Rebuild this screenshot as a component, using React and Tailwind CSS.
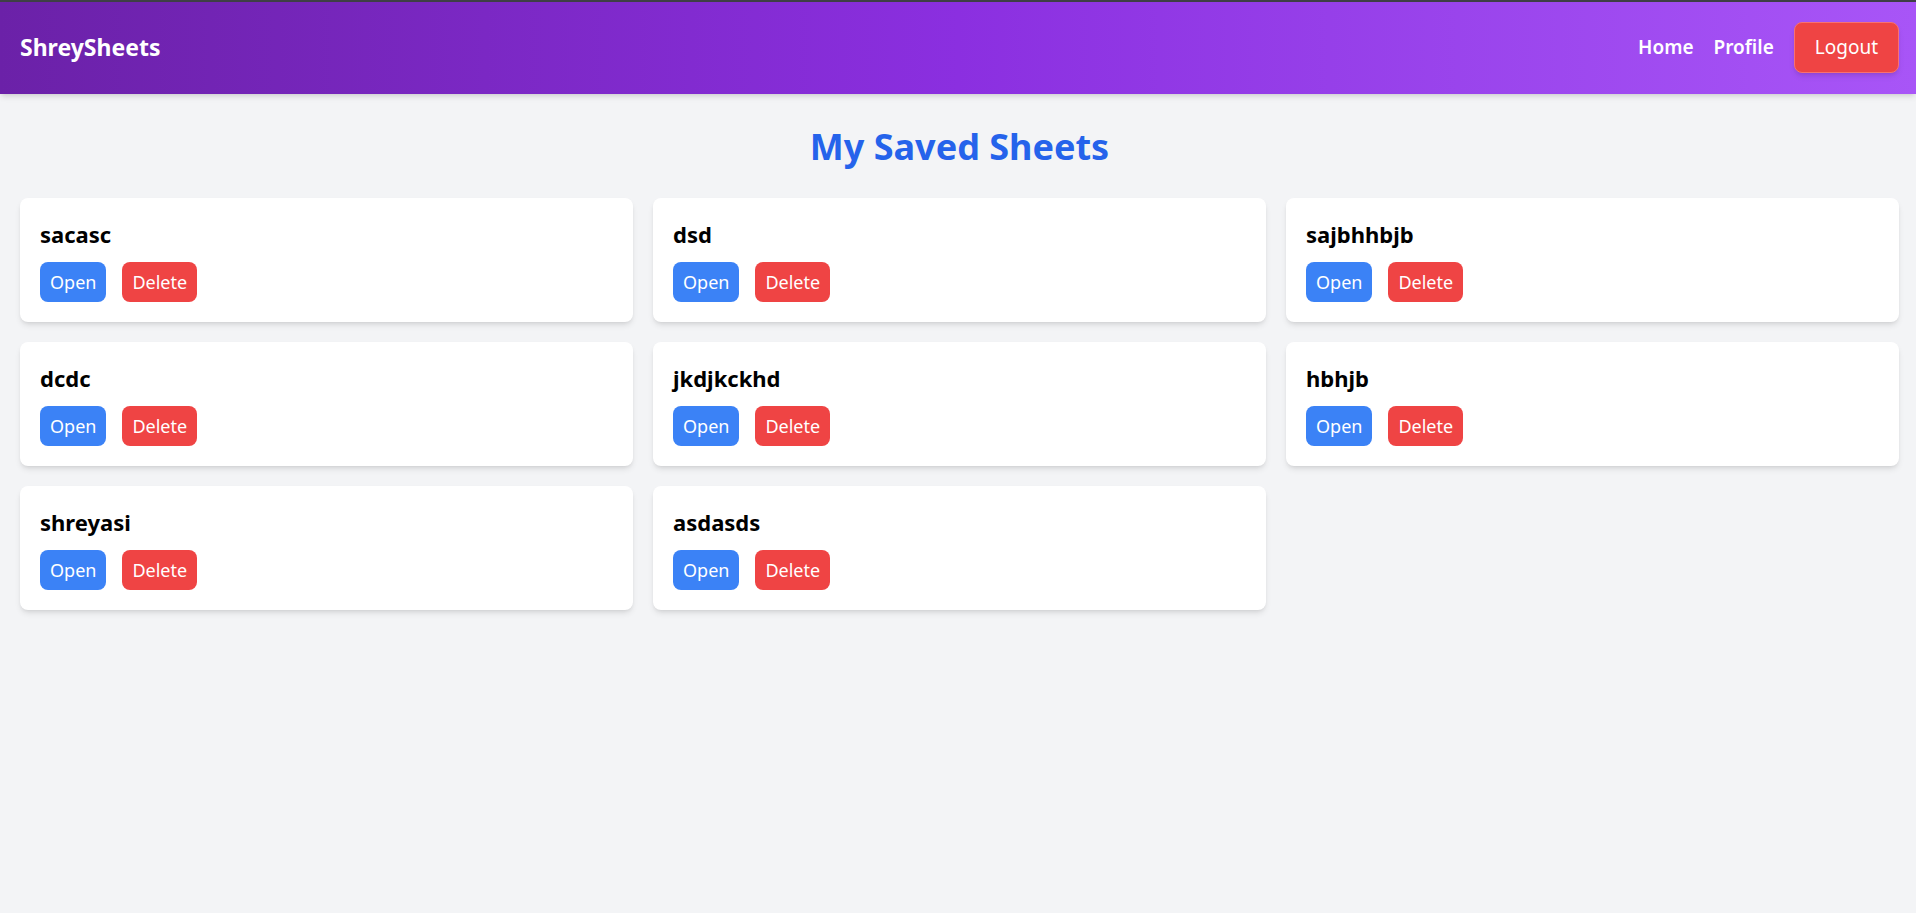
const sheets = ['sacasc', 'dsd', 'sajbhhbjb', 'dcdc', 'jkdjkckhd', 'hbhjb', 'shreyasi', 'asdasds'];

const SheetCard = ({ name }) => (
  <div className="bg-white rounded-lg shadow-md p-5">
    <h2 className="text-[22px] leading-8 font-bold text-black mb-3">{name}</h2>
    <div className="flex gap-4">
      <button className="bg-[#3b82f6] text-white text-lg px-2.5 py-1.5 rounded-lg leading-7">Open</button>
      <button className="bg-[#ef4444] text-white text-lg px-2.5 py-1.5 rounded-lg leading-7">Delete</button>
    </div>
  </div>
);

export default function App() {
  return (
    <div className="min-h-screen bg-[#f3f4f6] font-['Noto_Sans',sans-serif]">
      <div className="h-[2px] bg-[#3f3f46]" />
      <nav className="flex items-center justify-between pl-5 pr-[17px] pt-5 pb-[21px] bg-gradient-to-r from-[#6b21a8] via-[#8b2fe0] to-[#a855f7] shadow-md">
        <span className="text-[23px] font-bold text-white">ShreySheets</span>
        <div className="flex items-center gap-5">
          <a className="text-[19px] font-semibold text-white">Home</a>
          <a className="text-[19px] font-semibold text-white">Profile</a>
          <button className="bg-[#ef4444] text-white text-[19px] px-5 py-2.5 rounded-lg border border-[#f87171] shadow-md">Logout</button>
        </div>
      </nav>
      <main className="pl-5 pr-[17px] pt-[33px] pb-10">
        <h1 className="text-4xl font-bold text-[#2563eb] text-center mb-[31px]">My Saved Sheets</h1>
        <div className="grid grid-cols-3 gap-5">
          {sheets.map((s) => (
            <SheetCard key={s} name={s} />
          ))}
        </div>
      </main>
    </div>
  );
}
